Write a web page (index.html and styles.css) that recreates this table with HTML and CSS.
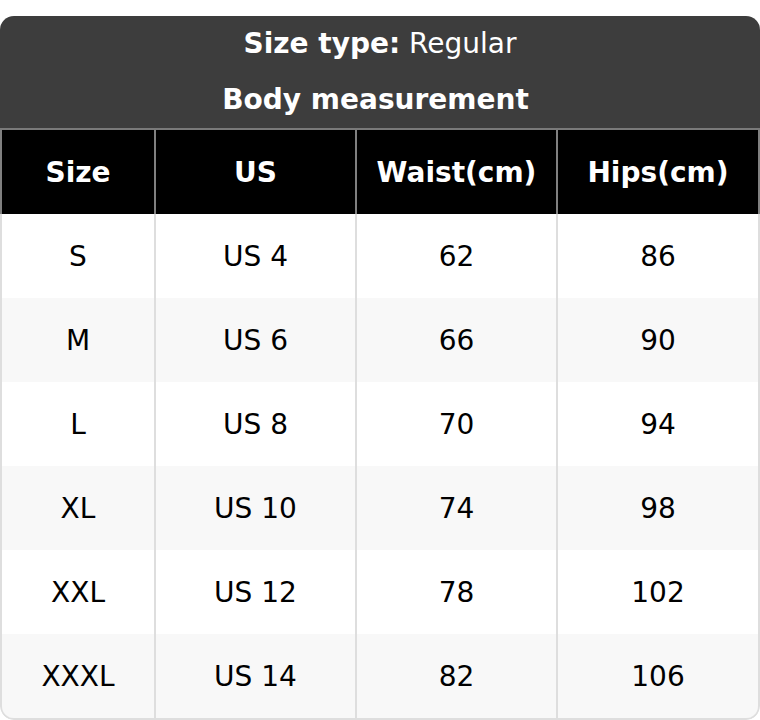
FILE: index.html
```html
<!DOCTYPE html>
<html>
<head>
<meta charset="utf-8">
<link rel="stylesheet" href="styles.css">
</head>
<body>
<div class="card">
  <div class="title">
    <div class="title-line"><b>Size type:</b> Regular</div>
    <div class="title-line sub"><b>Body measurement</b></div>
  </div>
  <div class="row head">
    <div class="cell">Size</div>
    <div class="cell">US</div>
    <div class="cell">Waist(cm)</div>
    <div class="cell">Hips(cm)</div>
  </div>
  <div class="tbody">
    <div class="row"><div class="cell">S</div><div class="cell">US 4</div><div class="cell">62</div><div class="cell">86</div></div>
    <div class="row alt"><div class="cell">M</div><div class="cell">US 6</div><div class="cell">66</div><div class="cell">90</div></div>
    <div class="row"><div class="cell">L</div><div class="cell">US 8</div><div class="cell">70</div><div class="cell">94</div></div>
    <div class="row alt"><div class="cell">XL</div><div class="cell">US 10</div><div class="cell">74</div><div class="cell">98</div></div>
    <div class="row"><div class="cell">XXL</div><div class="cell">US 12</div><div class="cell">78</div><div class="cell">102</div></div>
    <div class="row alt"><div class="cell">XXXL</div><div class="cell">US 14</div><div class="cell">82</div><div class="cell">106</div></div>
  </div>
</div>
</body>
</html>
```

FILE: styles.css
```css
html, body {
  margin: 0;
  padding: 0;
  background: #ffffff;
}
body {
  padding-top: 16px;
  font-family: "DejaVu Sans", "Liberation Sans", sans-serif;
  font-size: 28px;
}
.card {
  width: 760px;
  border-radius: 14px;
  overflow: hidden;
  box-sizing: border-box;
}
.title {
  background: #3d3d3d;
  color: #ffffff;
  border-bottom: 2px solid #7a7a7a;
}
.title-line {
  height: 56px;
  line-height: 56px;
  text-align: center;
}
.title-line.sub {
  padding-right: 9px;
}
.title b {
  font-weight: bold;
}
.row {
  display: grid;
  grid-template-columns: 152px 199px 199px 200px;
  column-gap: 2px;
  background: #dedede;
}
.row .cell {
  height: 84px;
  display: flex;
  align-items: center;
  justify-content: center;
  background: #ffffff;
  color: #000000;
}
.row.alt .cell {
  background: #f8f8f8;
}
.head {
  background: #808080;
  border-left: 2px solid #808080;
  border-right: 2px solid #808080;
}
.head .cell {
  background: #000000;
  color: #ffffff;
  font-weight: bold;
}
.tbody {
  border: 2px solid #dedede;
  border-top: 0;
  border-radius: 0 0 14px 14px;
  overflow: hidden;
}
```
